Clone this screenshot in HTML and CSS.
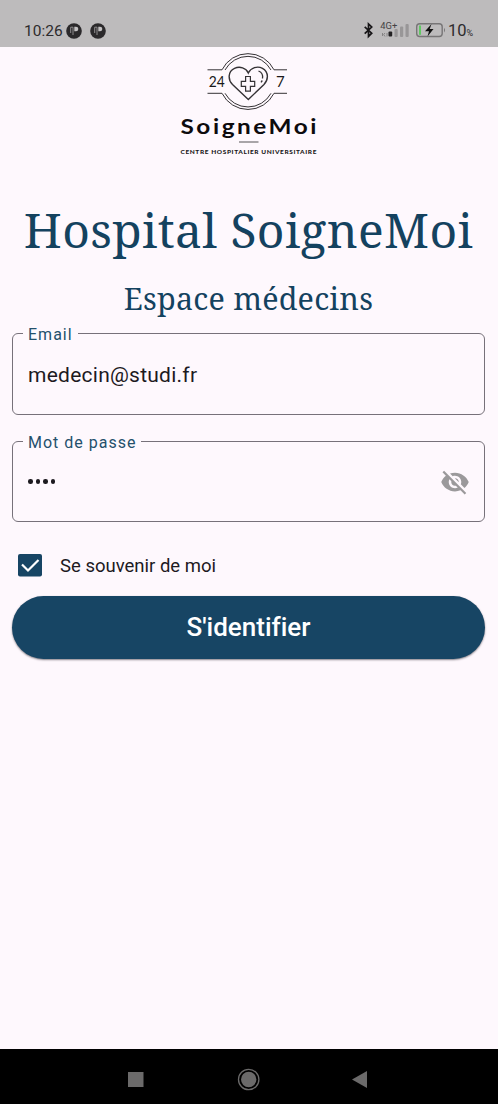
FILE: index.html
```html
<!DOCTYPE html>
<html lang="fr">
<head>
<meta charset="utf-8">
<title>Hospital SoigneMoi</title>
<link rel="stylesheet" href="styles.css">
</head>
<body>
<header class="status">
  <span class="time">10:26</span>
  <svg class="notif" width="16" height="16" viewBox="0 0 16 16"><circle cx="8" cy="8" r="7.8" fill="#2b292b"/><path d="M4.700 10V4.200H7V12" fill="none" stroke="#8f8d8e" stroke-width="1"/><path d="M8.300 3.700h1.700a2.200 2.200 0 0 1 0 4.600H8.300z" fill="#c4c2c3"/></svg>
  <svg class="notif second" width="16" height="16" viewBox="0 0 16 16"><circle cx="8" cy="8" r="7.8" fill="#2b292b"/><path d="M4.700 10V4.200H7V12" fill="none" stroke="#8f8d8e" stroke-width="1"/><path d="M8.300 3.700h1.700a2.200 2.200 0 0 1 0 4.600H8.300z" fill="#c4c2c3"/></svg>
  <svg class="system" width="88" height="24" viewBox="360 19 88 24">
    <path d="M364.700 26.800l7 6.400-3.200 3.200V24l3.200 3-7 6.600" fill="none" stroke="#171517" stroke-width="1.700"/>
    <text x="380.300" y="29" class="net" textLength="17" lengthAdjust="spacingAndGlyphs">4G+</text>
    <path d="M382.500 33v3M385 33l-1.300 1.500 1.300 2M387 33v3.500" stroke="#858384" fill="none"/>
    <rect x="388.500" y="31.500" width="3.700" height="5" rx="1" fill="#222022"/>
    <rect x="394.500" y="29" width="3.200" height="8" rx="1" fill="#989697"/>
    <rect x="400" y="26.500" width="3.200" height="10.500" rx="1" fill="#989697"/>
    <rect x="405.500" y="24" width="3.200" height="13" rx="1" fill="#989697"/>
    <rect x="416.700" y="23.700" width="25.500" height="12.800" rx="3" fill="none" stroke="#777576" stroke-width="1.400"/>
    <rect x="419" y="25.500" width="2" height="9.300" fill="#61c963"/>
    <path d="M444 27.800q2 2.300 0 4.600z" fill="#777576"/>
    <path d="M431.500 24l-6.500 7.300h4l-1.500 5.200 6-7.500h-3.800z" fill="#111"/>
  </svg>
  <span class="percent">10<small>%</small></span>
</header>
<main class="page">
  <svg class="logo" width="160" height="110" viewBox="170 50 160 110">
    <g fill="none" stroke="#353235" stroke-width="1">
      <path d="M207.500 69.800H222A29 29 0 0 1 274 69.800H287M207.500 93.300H222A29 29 0 0 0 274 93.300H287"/>
      <path d="M225 70A26.200 26.200 0 0 1 271 70M225 93.300A26.200 26.200 0 0 0 271 93.300"/>
      <path d="M248.300 99.500L232.500 84.500C228 80 227.500 71.500 234.500 68.300C240 66 246 68 248.300 73C251 67.500 257.500 65.800 262.500 68.300C269 72 268.500 80 264 84.500Z" stroke-width="1.400"/>
      <path d="M258.500 71Q263.500 73 262.500 78.500M262.300 80.500L261 82.300" stroke-width="1.300"/>
      <path d="M245.600 76.500h4.800v4.800h4.300v5h-4.300v4.800h-4.800v-4.800h-4.300v-5h4.300z" stroke-width="1.200"/>
    </g>
    <text x="208.700" y="87" class="hours" textLength="16" lengthAdjust="spacingAndGlyphs">24</text>
    <text x="276" y="87" class="hours">7</text>
    <text x="180.500" y="134" class="brand" textLength="138.500" lengthAdjust="spacingAndGlyphs">SoigneMoi</text>
    <path d="M239 142h19.500" stroke="#555255" stroke-width="1"/>
    <text x="180.500" y="154" class="tagline" textLength="136.500" lengthAdjust="spacingAndGlyphs">CENTRE HOSPITALIER UNIVERSITAIRE</text>
  </svg>
  <h1 class="title">Hospital SoigneMoi</h1>
  <h2 class="subtitle">Espace médecins</h2>
  <div class="field">
    <label class="label">Email</label>
    <span class="value">medecin@studi.fr</span>
  </div>
  <div class="field password">
    <label class="label">Mot de passe</label>
    <span class="dots"><i></i><i></i><i></i><i></i></span>
    <svg class="eye" width="30" height="30" viewBox="0 0 24 24" fill="#9b999b"><path d="M12 7c2.760 0 5 2.240 5 5 0 .650-.130 1.260-.360 1.830l2.920 2.920c1.510-1.260 2.700-2.890 3.430-4.750-1.730-4.390-6-7.500-11-7.500-1.400 0-2.740.250-3.980.700l2.160 2.160C10.740 7.130 11.350 7 12 7zM2 4.270l2.280 2.280.460.460C3.080 8.300 1.780 10.020 1 12c1.730 4.390 6 7.500 11 7.500 1.550 0 3.030-.300 4.380-.840l.420.420L19.730 22 21 20.730 3.270 3 2 4.270zM7.530 9.800l1.550 1.550c-.050.210-.080.430-.080.650 0 1.660 1.340 3 3 3 .220 0 .440-.030.650-.080l1.550 1.550c-.670.330-1.410.530-2.200.530-2.760 0-5-2.240-5-5 0-.790.200-1.530.530-2.200zm4.310-.780l3.150 3.150.020-.160c0-1.660-1.340-3-3-3l-.170.010z"/></svg>
  </div>
  <div class="remember">
    <svg width="24" height="23" viewBox="0 0 24 23"><rect width="24" height="22.500" rx="2" fill="#174564"/><path d="M4 10.500l6 6L20.500 6" fill="none" stroke="#fff" stroke-width="2.200"/></svg>
    <span>Se souvenir de moi</span>
  </div>
  <button class="submit">S'identifier</button>
</main>
<nav class="navbar">
  <svg width="498" height="55" viewBox="0 0 498 55" fill="#6b6a6a">
    <rect x="128" y="23" width="15.500" height="15"/>
    <circle cx="248.700" cy="30.500" r="7.700"/>
    <circle cx="248.700" cy="30.500" r="10.200" fill="none" stroke="#6b6a6a" stroke-width="1.300"/>
    <path d="M352 30.500L367 22v17z"/>
  </svg>
</nav>
</body>
</html>
```
FILE: styles.css
```css
* { box-sizing: border-box; }
body {
  margin: 0;
  height: 1104px;
  display: flex;
  flex-direction: column;
  background: #fef8fd;
  font-family: Roboto, "Liberation Sans", sans-serif;
  color: #1d1a1f;
  overflow: hidden;
}
.status {
  height: 47px;
  padding: 14px 0 0 24px;
  display: flex;
  align-items: center;
  background: #bdbbbc;
  color: #2d2b2d;
}
.time { width: 42px; font-size: 15.500px; white-space: nowrap; }
.second { margin-left: 8px; }
.system { margin-left: 254px; }
.percent { font-size: 16.500px; white-space: nowrap; }
.percent small { font-size: 9px; }
.net { font-size: 9px; fill: #444244; }
.page {
  flex: 1;
  padding: 3px 13px 0 12px;
  display: flex;
  flex-direction: column;
}
.logo { display: block; align-self: center; margin-left: 3px; }
.hours { font: 15px Lato, sans-serif; fill: #1a181a; }
.brand { font: bold 21px Lato, sans-serif; letter-spacing: 2.200px; fill: #0d0b0d; }
.tagline { font: 900 5.300px Lato, sans-serif; letter-spacing: 0.500px; fill: #1a181a; }
.title, .subtitle {
  margin: 0;
  align-self: center;
  font-family: "Noto Serif", "Droid Serif", "DejaVu Serif Condensed", "DejaVu Serif", serif;
  font-weight: 400;
  color: #14425f;
  white-space: nowrap;
}
.title { margin-top: 38px; height: 64px; font-size: 48px; line-height: 64px; letter-spacing: 0.350px; }
.subtitle { margin-top: 15px; height: 42px; font-size: 30.500px; line-height: 42px; letter-spacing: 0.200px; }
.field {
  position: relative;
  height: 82px;
  margin-top: 14px;
  padding: 0 14px 0 15px;
  display: flex;
  align-items: center;
  border: 1px solid #77717a;
  border-radius: 6px;
}
.password { margin-top: 26px; height: 81px; }
.label {
  position: absolute;
  left: 10px;
  top: -9px;
  padding: 0 5px;
  background: #fef8fd;
  color: #24506c;
  font-size: 16px;
  line-height: 19px;
  letter-spacing: 1px;
}
.value { margin-top: 2px; font-size: 21px; letter-spacing: 0.250px; }
.dots { display: flex; gap: 3px; }
.dots i { width: 4.500px; height: 4.500px; border-radius: 50%; background: #1d1a1f; }
.eye { margin-left: auto; }
.remember {
  height: 23px;
  margin: 32px 0 0 6px;
  display: flex;
  align-items: center;
  gap: 18px;
  font-size: 18.500px;
}
.submit {
  margin: 19px 0 0;
  height: 63px;
  padding-bottom: 3px;
  border: 0;
  border-radius: 32px;
  background: #174564;
  color: #fff;
  font: 500 26px Roboto, "Liberation Sans", sans-serif;
  font-variant-ligatures: none;
  box-shadow: 0 1px 2px #35303899;
}
.navbar { height: 55px; background: #000; }
.navbar svg { display: block; }
```
